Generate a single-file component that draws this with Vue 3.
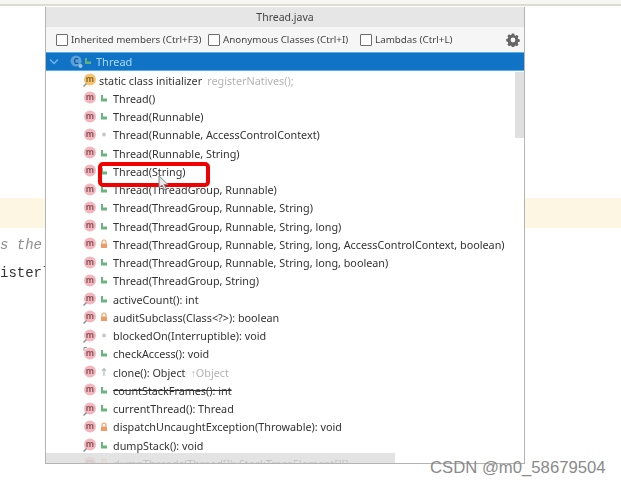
<script setup>
const rows = [
  { kind: 'init', text: 'static class initializer', hint: 'registerNatives();' },
  { vis: 'pub', text: 'Thread()' },
  { vis: 'pub', text: 'Thread(Runnable)' },
  { vis: 'pkg', text: 'Thread(Runnable, AccessControlContext)' },
  { vis: 'pub', text: 'Thread(Runnable, String)' },
  { vis: 'pub', text: 'Thread(String)' },
  { vis: 'pub', text: 'Thread(ThreadGroup, Runnable)' },
  { vis: 'pub', text: 'Thread(ThreadGroup, Runnable, String)' },
  { vis: 'pub', text: 'Thread(ThreadGroup, Runnable, String, long)' },
  { vis: 'pri', text: 'Thread(ThreadGroup, Runnable, String, long, AccessControlContext, boolean)' },
  { vis: 'pub', text: 'Thread(ThreadGroup, Runnable, String, long, boolean)' },
  { vis: 'pub', text: 'Thread(ThreadGroup, String)' },
  { vis: 'pub', pin: true, text: 'activeCount(): int' },
  { vis: 'pri', pin: true, text: 'auditSubclass(Class<?>): boolean' },
  { vis: 'pkg', pin: true, text: 'blockedOn(Interruptible): void' },
  { vis: 'pub', top: true, text: 'checkAccess(): void' },
  { vis: 'pro', text: 'clone(): Object', hint: '↑Object' },
  { vis: 'pub', strike: true, text: 'countStackFrames(): int' },
  { vis: 'pub', pin: true, text: 'currentThread(): Thread' },
  { vis: 'pri', text: 'dispatchUncaughtException(Throwable): void' },
  { vis: 'pub', pin: true, text: 'dumpStack(): void' },
  { vis: 'pri', pin: true, text: 'dumpThreads(Thread[]): StackTraceElement[][]' },
]
const checks = ['Inherited members (Ctrl+F3)', 'Anonymous Classes (Ctrl+I)', 'Lambdas (Ctrl+L)']
</script>

<template>
  <div class="page">
    <div class="backdrop">
      <div class="topline"></div>
      <div class="band"></div>
      <div class="comment">s the</div>
      <div class="code">isterl</div>
    </div>

    <section class="popup">
      <header class="title">Thread.java</header>
      <div class="toolbar">
        <label v-for="c in checks" :key="c" class="check"><span class="box"></span>{{ c }}</label>
        <svg class="gear" width="14" height="14" viewBox="0 0 14 14">
          <path fill="#666" fill-rule="evenodd" d="M5.800 1h2.400l.3 1.700 1 .5 1.500-.9 1.600 1.700-.9 1.400.4 1.100 1.700.4v2.200l-1.700.4-.4 1.100.9 1.400-1.600 1.700-1.500-.9-1 .5-.3 1.700H5.800l-.3-1.700-1-.5-1.500.9-1.600-1.700.9-1.400-.4-1.100L.2 8.600V6.300l1.700-.4.4-1.100-.9-1.400L3 1.700l1.500.9 1-.5zM7 5a2.400 2.400 0 1 0 0 4.800A2.400 2.400 0 0 0 7 5z" transform="translate(0 -.4)"/>
        </svg>
      </div>
      <div class="selected">
        <svg class="chev" width="10" height="8" viewBox="0 0 10 8"><path d="M1 1.500l4 4 4-4" fill="none" stroke="#6fb4e6" stroke-width="1.500"/></svg>
        <svg class="cls" width="15" height="15" viewBox="0 0 15 15">
          <circle cx="7" cy="7" r="5.500" fill="#5d9fd6"/>
          <text x="7" y="10" text-anchor="middle" class="cls-letter">C</text>
          <circle cx="11.500" cy="12" r="2" fill="#9cc4e4"/>
        </svg>
        <svg class="leaf" width="8" height="9" viewBox="0 0 8 9"><path d="M1 1v6h6V4.500H3V1z" fill="#63b07c"/></svg>
        <span>Thread</span>
      </div>
      <div class="list">
        <div v-for="r in rows" :key="r.text" class="row">
          <svg class="badge" width="16" height="16" viewBox="0 0 16 16">
            <circle cx="8" cy="7.500" r="6" :fill="r.kind === 'init' ? '#f6c46f' : '#f4b6bc'"/>
            <text x="8" y="10" text-anchor="middle" class="m-letter" :fill="r.kind === 'init' ? '#8a6a2a' : '#8a5860'">m</text>
            <path v-if="r.pin || r.kind === 'init'" d="M1.500 14.500l3-3" stroke="#8d8d8d" stroke-width="1.500"/>
            <path v-if="r.top" d="M2 1.500h3M2 1.500v3" stroke="#8d8d8d" stroke-width="1"/>
          </svg>
          <span v-if="r.kind !== 'init'" class="vis">
            <svg v-if="r.vis === 'pub'" width="8" height="9" viewBox="0 0 8 9"><path d="M1 1v6.500h6V4.500H3V1z" fill="#69b57f"/></svg>
            <svg v-else-if="r.vis === 'pkg'" width="8" height="9" viewBox="0 0 8 9"><circle cx="4" cy="4.500" r="2" fill="#c9c9c9"/></svg>
            <svg v-else-if="r.vis === 'pri'" width="8" height="10" viewBox="0 0 8 10"><path d="M2 4.500V3a2 2 0 0 1 4 0v1.500" fill="none" stroke="#ee9a62" stroke-width="1.100"/><rect x="1" y="4.500" width="6" height="4.500" fill="#ee9a62"/></svg>
            <svg v-else width="8" height="10" viewBox="0 0 8 10"><path d="M4 9V2M2 4l2-2.500L6 4" fill="none" stroke="#b4bcc0" stroke-width="1.200"/></svg>
          </span>
          <span :class="['label', { strike: r.strike }]">{{ r.text }}</span>
          <span v-if="r.hint" class="hint">{{ r.hint }}</span>
        </div>
      </div>
      <div class="thumb"></div>
      <div class="hbar"></div>
      <div class="callout"></div>
      <svg class="cursor" width="12" height="16" viewBox="0 0 12 16"><path d="M1 1v11.500l3-2.500 2.500 5 2-1-2.500-4.500h4z" fill="#e8e8e8" stroke="#7f8790" stroke-width="1"/></svg>
    </section>

    <div class="mark">CSDN @m0_58679504</div>
  </div>
</template>

<style scoped>
.page {
  position: relative;
  width: 621px;
  height: 485px;
  overflow: hidden;
  background: #fff;
  font-family: "Noto Sans", "Open Sans", sans-serif;
}
.backdrop {
  display: flex;
  flex-direction: column;
  height: 100%;
  filter: blur(0.5px);
}
.topline {
  height: 6px;
  flex: none;
  background: #f7f7f2;
  border-bottom: 2px solid #dcdcd0;
  box-sizing: border-box;
}
.band {
  height: 30px;
  flex: none;
  margin-top: 192px;
  background: #fdf6e3;
}
.comment {
  margin: 7px 0 0 0;
  font: italic 14px/20px "Liberation Mono", monospace;
  color: #8f8f8f;
}
.code {
  margin: 8px 0 0 0;
  font: 14px/20px "Liberation Mono", monospace;
  color: #333;
}
.popup {
  position: absolute;
  left: 45px;
  top: 7px;
  width: 480px;
  height: 457px;
  box-sizing: border-box;
  display: flex;
  flex-direction: column;
  overflow: hidden;
  background: #fff;
  border: 1px solid #b4b4b4;
  border-top: 0;
  font-size: 10.800px;
  color: #333;
}
.title {
  height: 20px;
  flex: none;
  background: #e6e6e6;
  text-align: center;
  line-height: 20px;
  font-size: 10.500px;
  color: #444;
  filter: blur(0.4px);
}
.toolbar {
  height: 25px;
  flex: none;
  display: flex;
  align-items: center;
  padding-left: 10px;
  background: #f6f6f6;
  position: relative;
  color: #444;
  font-size: 9.800px;
  filter: blur(0.4px);
}
.check {
  display: flex;
  align-items: center;
  width: 152px;
  white-space: nowrap;
}
.box {
  width: 10px;
  height: 10px;
  flex: none;
  margin-right: 3px;
  background: #fff;
  border: 1px solid #6d6d6d;
  border-radius: 1px;
}
.gear {
  position: absolute;
  left: 460px;
  top: 6px;
}
.selected {
  height: 19px;
  flex: none;
  box-sizing: border-box;
  display: flex;
  align-items: center;
  padding-left: 3px;
  background: #1173c6;
  border-top: 1px solid #58aee6;
  border-bottom: 1px solid #58aee6;
  color: #a9d8f6;
  font-size: 11px;
  filter: blur(0.4px);
}
.chev { margin-right: 10px; }
.cls { margin-right: 0; }
.cls-letter { font-size: 8px; fill: #0d5ca0; font-weight: 700; }
.m-letter { font-size: 8.500px; font-weight: 700; }
.leaf { margin: 0 4px 0 0; }
.list {
  flex: 1;
  min-height: 0;
  overflow: hidden;
  filter: blur(0.45px);
}
.row {
  height: 18.250px;
  display: flex;
  align-items: center;
  padding-left: 36px;
  white-space: nowrap;
}
.badge { flex: none; margin-right: 1px; }
.vis {
  width: 14px;
  flex: none;
  display: flex;
  justify-content: flex-start;
  padding-left: 1px;
  box-sizing: border-box;
}
.strike { text-decoration: line-through; }
.hint { margin-left: 5px; color: #b4b4b4; }
.thumb {
  position: absolute;
  right: 0;
  top: 65px;
  width: 9px;
  height: 66px;
  background: #e0e0e0;
}
.hbar {
  position: absolute;
  left: 0;
  bottom: 0;
  width: 349px;
  height: 10px;
  background: rgba(222, 222, 222, 0.85);
}
.callout {
  position: absolute;
  left: 52px;
  top: 155px;
  width: 112px;
  height: 25px;
  box-sizing: border-box;
  border: 4px solid #f00000;
  border-radius: 5px;
}
.cursor {
  position: absolute;
  left: 112px;
  top: 168px;
}
.mark {
  position: absolute;
  left: 430px;
  top: 459px;
  font: 16.700px/18px "Liberation Sans", sans-serif;
  color: #8a8a8a;
  white-space: nowrap;
}
</style>
